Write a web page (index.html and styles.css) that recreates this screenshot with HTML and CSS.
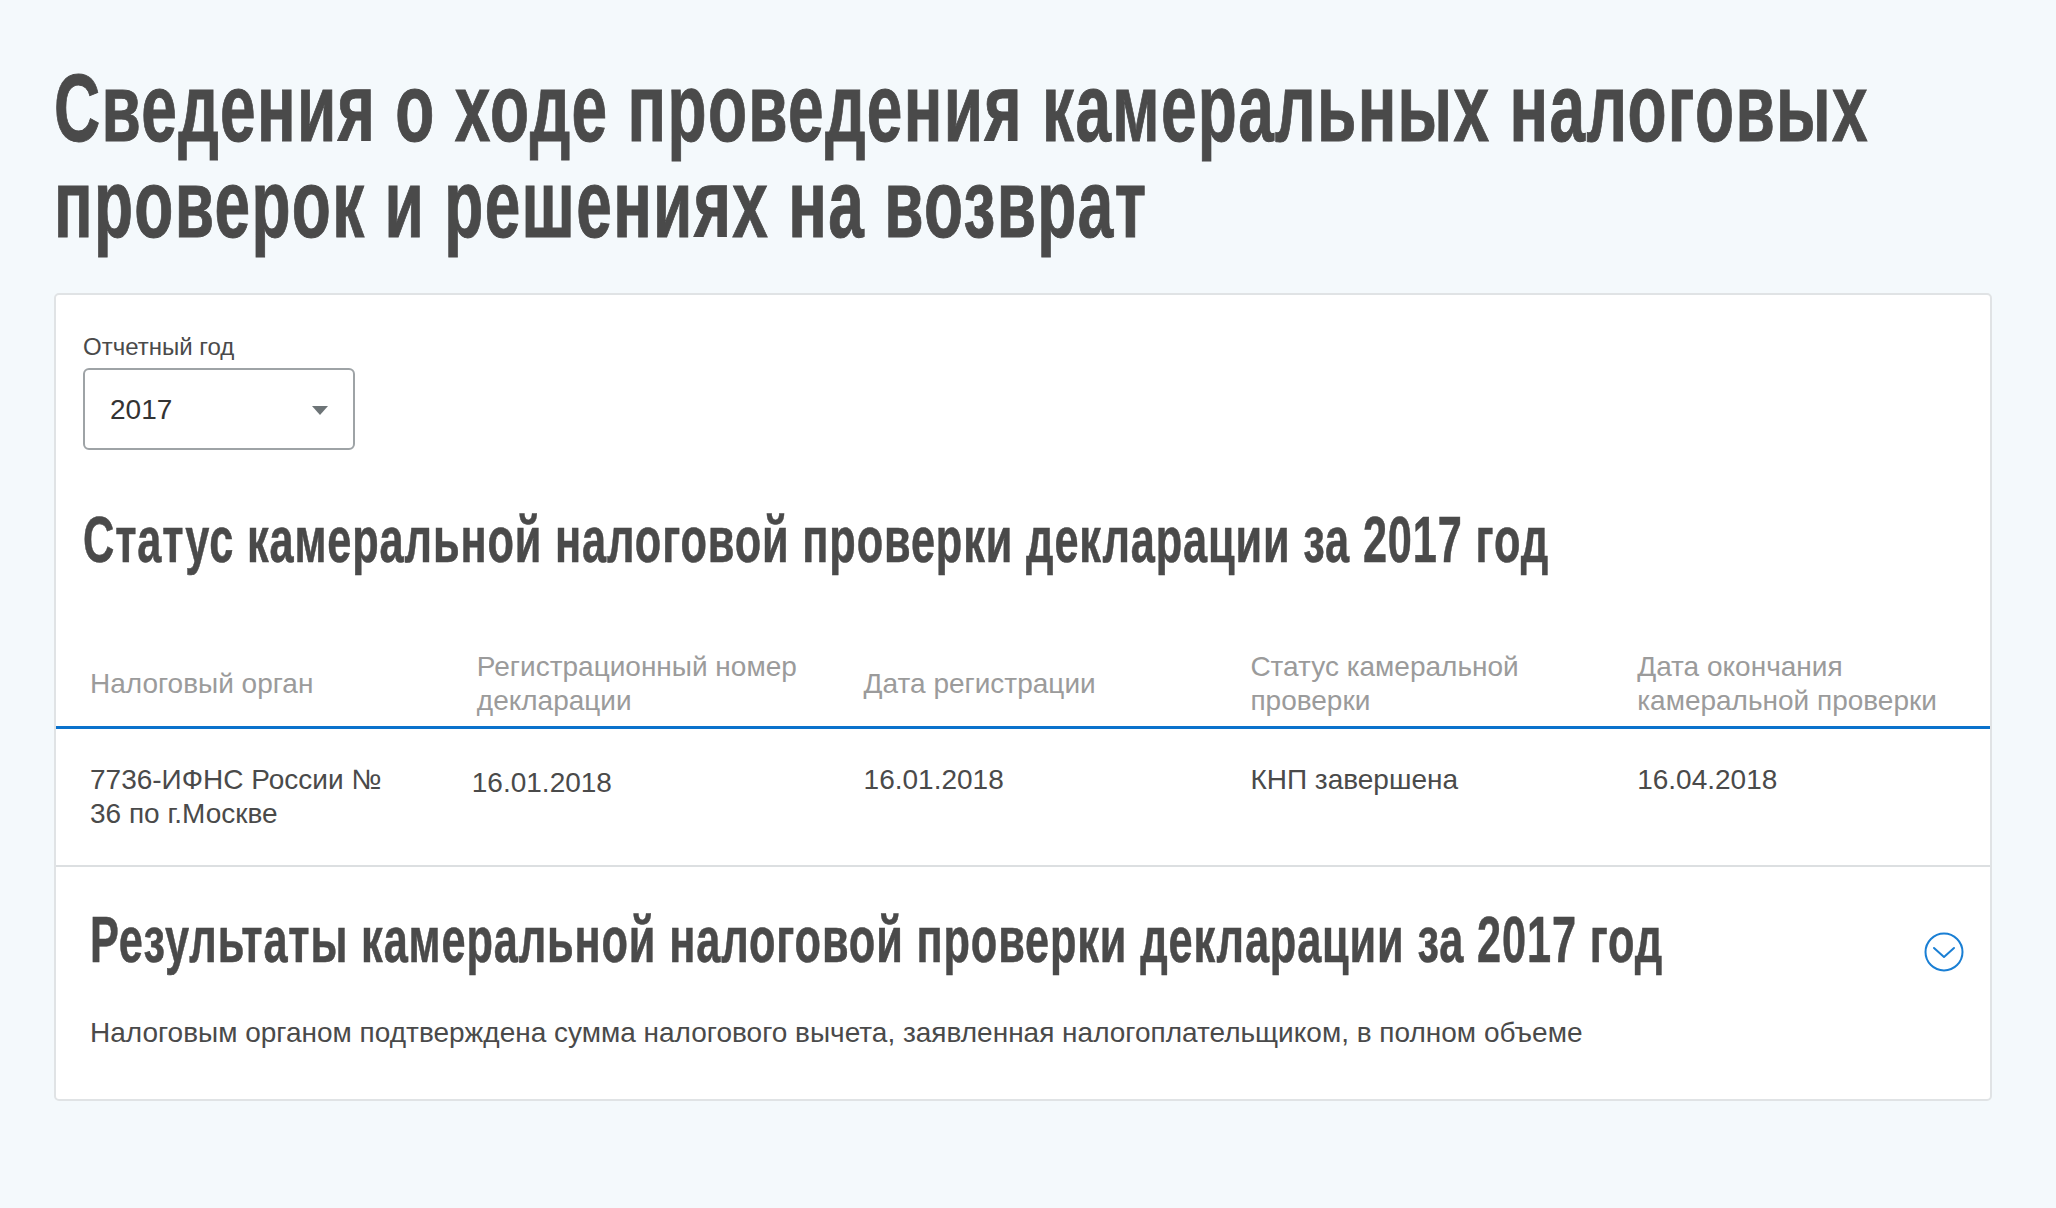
FILE: index.html
```html
<!DOCTYPE html>
<html lang="ru">
<head>
    <meta charset="UTF-8">
    <title>Сведения о ходе проведения камеральных налоговых проверок</title>
    <link rel="stylesheet" href="styles.css">
</head>
<body>
    <h1 class="page-title">Сведения о ходе проведения камеральных налоговых<br>проверок и решениях на возврат</h1>
    <div class="card">
        <div class="year-block">
            <label class="year-label">Отчетный год</label>
            <div class="year-select">
                <span>2017</span>
                <span class="year-arrow"></span>
            </div>
        </div>
        <h2 class="status-title">Статус камеральной налоговой проверки декларации за 2017 год</h2>
        <div class="table-head">
            <div class="cell">Налоговый орган</div>
            <div class="cell wide">Регистрационный номер декларации</div>
            <div class="cell">Дата регистрации</div>
            <div class="cell">Статус камеральной проверки</div>
            <div class="cell">Дата окончания камеральной проверки</div>
        </div>
        <div class="table-row">
            <div class="cell">7736-ИФНС России № 36 по г.Москве</div>
            <div class="cell shifted">16.01.2018</div>
            <div class="cell">16.01.2018</div>
            <div class="cell">КНП завершена</div>
            <div class="cell">16.04.2018</div>
        </div>
        <div class="results">
            <div class="results-head">
                <h2 class="results-title">Результаты камеральной налоговой проверки декларации за 2017 год</h2>
                <svg class="results-toggle" width="40" height="40" viewBox="0 0 40 40" fill="none" stroke="#1a7fd4" stroke-width="2">
                    <circle cx="20" cy="20" r="18.5"/>
                    <path d="M10 16l10 9 10-9" stroke-linecap="round" stroke-linejoin="round"/>
                </svg>
            </div>
            <p class="results-text">Налоговым органом подтверждена сумма налогового вычета, заявленная налогоплательщиком, в полном объеме</p>
        </div>
    </div>
</body>
</html>
```

FILE: styles.css
```css
body { margin: 0; min-height: 1208px; box-sizing: border-box; padding: 60px 64px 0 54px; background: #f4f9fc; color: #4a4a4a; font-family: "Liberation Sans", Arial, sans-serif; overflow: hidden; }
/* no condensed font installed, so the headings are squeezed sideways */
.page-title, .status-title, .results-title { font-weight: 700; white-space: nowrap; transform: scaleX(0.666); transform-origin: left center; }
.page-title { margin: 0 0 41px 0; font-size: 96px; line-height: 96px; letter-spacing: 2px; -webkit-text-stroke: 1px #4a4a4a; }
.card { background: #fff; border: 2px solid #e0e3e5; border-radius: 5px; height: 808px; box-sizing: border-box; }
.year-block { padding: 38px 0 0 27px; }
.year-label { display: block; font-size: 24px; line-height: 28px; }
.year-select { display: flex; justify-content: space-between; align-items: center; width: 272px; height: 82px; margin-top: 7px; padding: 2px 25px 0 25px; box-sizing: border-box; border: 2px solid #9ea3a6; border-radius: 6px; font-size: 28px; color: #333; }
.year-arrow { width: 0; height: 0; border-left: 8.5px solid transparent; border-right: 8.5px solid transparent; border-top: 9px solid #6d7477; }
.status-title { margin: 55px 0 0 27px; font-size: 65px; line-height: 70px; letter-spacing: 1.3px; -webkit-text-stroke: 0.6px #4a4a4a; }
.table-head, .table-row { display: grid; grid-template-columns: repeat(5, 1fr); }
.table-head { align-items: center; margin-top: 75px; padding-bottom: 8px; border-bottom: 3px solid #0b72cc; color: #9b9b9b; }
.table-row { height: 138px; box-sizing: border-box; padding-top: 34px; border-bottom: 2px solid #dcdfe1; }
.cell { padding: 0 34px; font-size: 28px; line-height: 34px; }
.wide { padding-right: 0; }
.shifted { padding: 3px 34px 0 29px; }
.results { padding: 0 26px 0 34px; }
.results-head { display: flex; justify-content: space-between; align-items: center; padding-top: 35px; }
.results-title { flex: 1; min-width: 0; margin: 0; font-size: 65px; line-height: 76px; letter-spacing: 1.3px; -webkit-text-stroke: 0.6px #4a4a4a; }
.results-toggle { margin-top: 24px; }
.results-text { margin: 38px 0 0 0; font-size: 28px; line-height: 34px; }
```
